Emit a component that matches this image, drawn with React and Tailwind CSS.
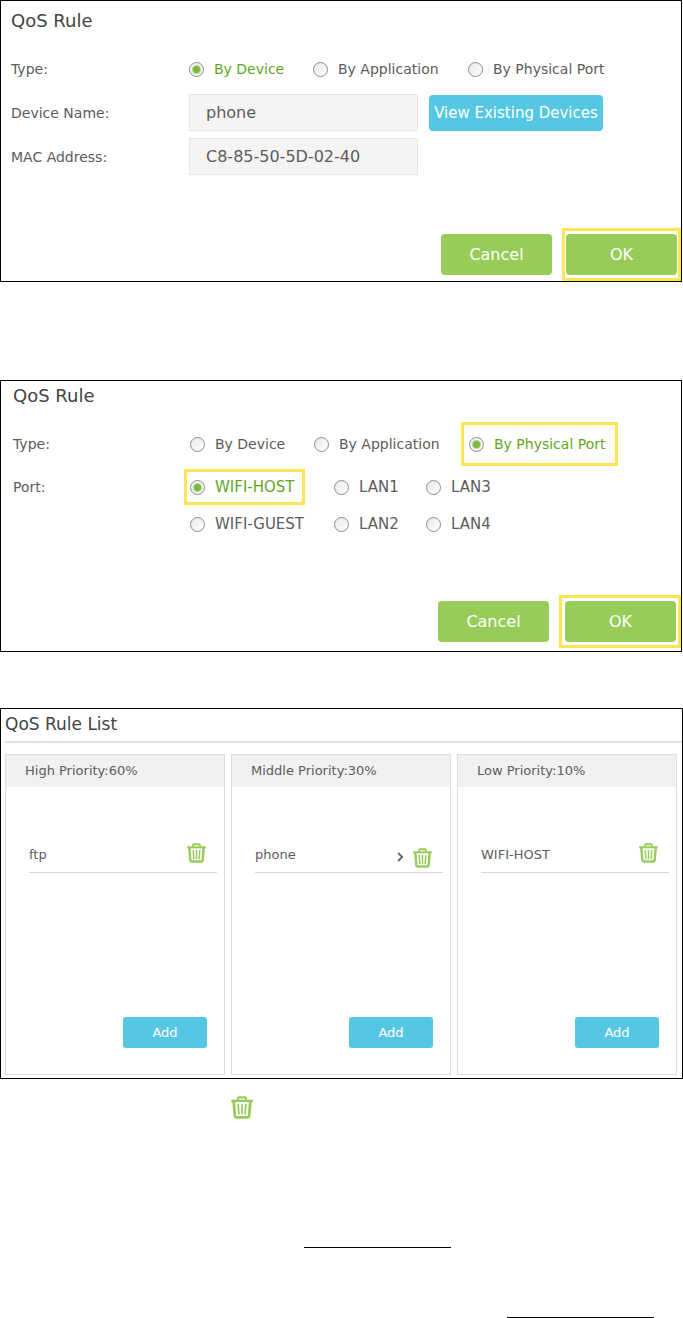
import React, { useState } from 'react'

const TYPES = ['By Device', 'By Application', 'By Physical Port']
const PORTS = ['WIFI-HOST', 'LAN1', 'LAN3', 'WIFI-GUEST', 'LAN2', 'LAN4']

const PRIORITIES = [
  { title: 'High Priority:60%', rule: 'ftp' },
  { title: 'Middle Priority:30%', rule: 'phone', more: true },
  { title: 'Low Priority:10%', rule: 'WIFI-HOST' },
]

const TrashIcon = ({ className }) => (
  <svg viewBox="0 0 22 23" fill="none" stroke="#97cc58" className={className} aria-hidden="true">
    <path d="M7 4V2.6Q7 1.4 8.2 1.4H13.8Q15 1.4 15 2.6V4" strokeWidth="2.2" />
    <path d="M0.2 4.9H21.8" strokeWidth="2.4" />
    <path d="M2.6 5L3.9 20.2Q4 21.4 5.2 21.4H16.8Q18 21.4 18.1 20.2L19.4 5" strokeWidth="2.8" />
    <path d="M7.2 8L7.9 18.6M11 8V18.6M14.8 8L14.1 18.6" strokeWidth="1.7" />
  </svg>
)

// frame is the spacing of the yellow highlight round the option
const Radio = ({ name, label, checked, onChange, frame, text = 'text-[14px]' }) => (
  <label className={`relative flex h-5 w-fit items-center gap-[10px] whitespace-nowrap ${text}`}>
    <input
      type="radio"
      name={name}
      checked={checked}
      onChange={onChange}
      className="peer size-[15px] shrink-0 appearance-none rounded-full border border-[#8c8c8c] bg-[linear-gradient(135deg,#e8e8e8,#ffffff)] checked:bg-[radial-gradient(circle,#7cb937_3px,#f4f4f4_5px)]"
    />
    <span className="peer-checked:text-[#64a51e]">{label}</span>
    {frame && (
      <span className={`pointer-events-none absolute border-[3px] border-[#ffe553] ${frame}`} />
    )}
  </label>
)

const TypeRow = ({ name, value, onChange, marked }) => (
  <div role="radiogroup" aria-label="Type" className="grid flex-1 grid-cols-[124px_155px_1fr]">
    {TYPES.map((type) => (
      <Radio
        key={type}
        name={name}
        label={type}
        checked={value === type}
        onChange={() => onChange(type)}
        frame={marked === type ? '-inset-y-3 -left-2 -right-3' : null}
      />
    ))}
  </div>
)

const Actions = ({ className, frame }) => (
  <div className={`flex items-center justify-end gap-[10px] text-[16px] text-white ${className}`}>
    <button type="button" className="h-[41px] w-[111px] rounded bg-[#97cc58]">Cancel</button>
    <div className={`border-[3px] border-[#ffe553] py-[3px] ${frame}`}>
      <button type="button" className="block h-[41px] w-[111px] rounded bg-[#97cc58]">OK</button>
    </div>
  </div>
)

const DeviceRule = () => {
  const [type, setType] = useState('By Device')

  return (
    <section className="mr-px border border-black pt-2">
      <div className="pl-[10px]">
        <h2 className="text-[18px] leading-6 text-[#444444]">QoS Rule</h2>
        <div className="mt-[26px] flex h-5 items-center">
          <span className="w-[178px] shrink-0">Type:</span>
          <TypeRow name="device-type" value={type} onChange={setType} />
        </div>
        <div className="mt-[15px] flex items-center">
          <label htmlFor="device-name" className="w-[178px] shrink-0">Device Name:</label>
          <input
            id="device-name"
            type="text"
            defaultValue="phone"
            className="h-[37px] w-[229px] border border-[#e6e6e6] bg-[#f4f4f4] px-4 text-[16px]"
          />
          <button type="button" className="ml-[11px] h-9 w-[174px] whitespace-nowrap rounded bg-[#55c7e3] text-[15px] text-white">
            View Existing Devices
          </button>
        </div>
        <div className="mt-[7px] flex items-center">
          <label htmlFor="mac-address" className="w-[178px] shrink-0">MAC Address:</label>
          <input
            id="mac-address"
            type="text"
            defaultValue="C8-85-50-5D-02-40"
            className="h-[37px] w-[229px] border border-[#e6e6e6] bg-[#f4f4f4] px-4 text-[16px]"
          />
        </div>
      </div>
      <Actions className="mt-[53px]" frame="px-px" />
    </section>
  )
}

const PortRule = () => {
  const [type, setType] = useState('By Physical Port')
  const [port, setPort] = useState('WIFI-HOST')

  return (
    <section className="mr-px mt-[98px] border border-black pb-[3px] pt-[3px]">
      <div className="pl-[12px]">
        <h2 className="text-[18px] leading-6 text-[#444444]">QoS Rule</h2>
        <div className="mt-[26px] flex h-5 items-center">
          <span className="w-[177px] shrink-0">Type:</span>
          <TypeRow name="port-type" value={type} onChange={setType} marked="By Physical Port" />
        </div>
        <div className="mt-[23px] flex">
          <span className="w-[177px] shrink-0 leading-5">Port:</span>
          <div role="radiogroup" aria-label="Port" className="grid flex-1 grid-cols-[144px_92px_1fr] gap-y-[17px]">
            {PORTS.map((item) => (
              <Radio
                key={item}
                name="port"
                label={item}
                checked={port === item}
                onChange={() => setPort(item)}
                frame={item === 'WIFI-HOST' ? '-inset-y-2 -left-[6px] -right-[10px]' : null}
                text="text-[15px]"
              />
            ))}
          </div>
        </div>
      </div>
      <Actions className="mt-[61px]" frame="pl-[3px] pr-[2px]" />
    </section>
  )
}

const PriorityColumn = ({ title, rule, more }) => (
  <div className="flex h-[321px] flex-col border border-[#dddddd] text-[13px]">
    <h3 className="bg-[#f1f1f1] pl-[19px] leading-8">{title}</h3>
    <div className="ml-[23px] mr-[7px] mt-[46px] flex h-10 items-center border-b border-[#d6d6d6] pr-[11px]">
      <span className="flex-1 pt-[5px]">{rule}</span>
      {more && (
        <svg viewBox="0 0 7 10" fill="none" stroke="#666666" strokeWidth="1.8" className="mr-[9px] mt-2 h-[10px] w-[7px]" aria-hidden="true">
          <path d="M1.2 1L5.2 5L1.2 9" />
        </svg>
      )}
      <button type="button" aria-label={`Delete ${rule}`} className={more ? 'pt-[10px]' : ''}>
        <TrashIcon className="h-5 w-[19px]" />
      </button>
    </div>
    <button type="button" className="mb-[26px] mr-[17px] mt-auto h-[31px] w-[84px] self-end rounded-[3px] bg-[#55c7e3] text-white">
      Add
    </button>
  </div>
)

const RuleList = () => (
  <section className="mt-[56px] border border-black pb-[3px] pl-1 pt-[3px]">
    <h2 className="text-[17px] leading-6 text-[#444444]">QoS Rule List</h2>
    <hr className="mt-[5px] border-t-2 border-[#e0e0e0]" />
    <div className="mr-[5px] mt-[11px] grid grid-cols-3 gap-[6px]">
      {PRIORITIES.map((item) => (
        <PriorityColumn key={item.title} {...item} />
      ))}
    </div>
  </section>
)

const App = () => {
  return (
    <main className="bg-white font-['DejaVu_Sans',Verdana,sans-serif] text-[14px] leading-5 text-[#5c5c5c]">
      <DeviceRule />
      <PortRule />
      <RuleList />
      <div className="flex flex-col">
        <TrashIcon className="ml-[231px] mt-[17px] h-[23px] w-[22px]" />
        <div className="ml-[304px] mt-[128px] w-[147px] border-t border-black" />
        <div className="mr-[29px] mt-[69px] w-[147px] self-end border-t border-black" />
      </div>
    </main>
  )
}

export default App
